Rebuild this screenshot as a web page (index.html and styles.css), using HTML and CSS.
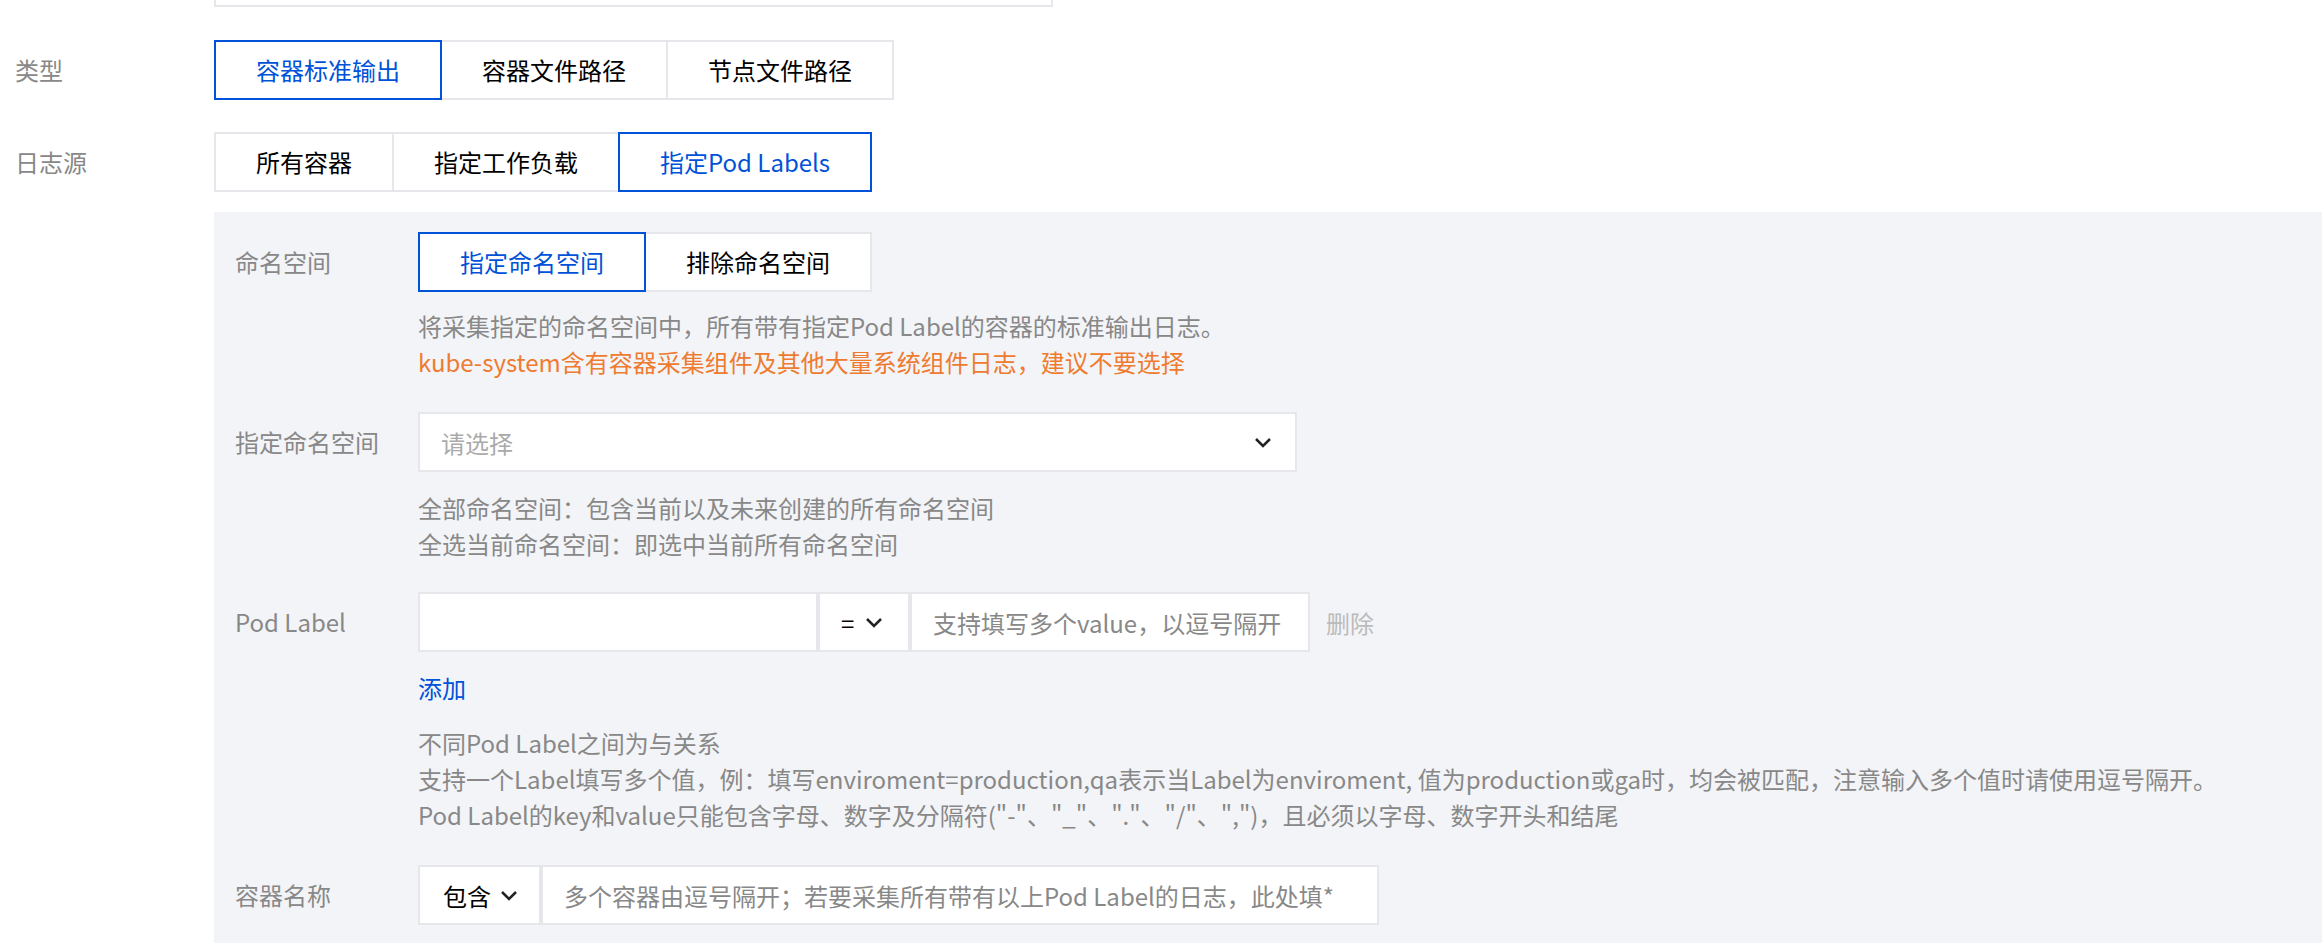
FILE: index.html
```html
<!DOCTYPE html>
<html lang="zh-CN">
<head>
<meta charset="UTF-8" />
<title>日志采集规则</title>
<link rel="stylesheet" href="styles.css">
</head>
<body>
<div class="page">
  <div class="stub"></div>

  <div class="field">
    <div class="field-label">类型</div>
    <div class="seg">
      <button class="seg-btn active">容器标准输出</button>
      <button class="seg-btn">容器文件路径</button>
      <button class="seg-btn">节点文件路径</button>
    </div>
  </div>

  <div class="field">
    <div class="field-label">日志源</div>
    <div class="seg">
      <button class="seg-btn">所有容器</button>
      <button class="seg-btn">指定工作负载</button>
      <button class="seg-btn active">指定Pod Labels</button>
    </div>
  </div>

  <section class="panel">
    <div class="sub-field">
      <div class="sub-label">命名空间</div>
      <div class="sub-control">
        <div class="seg">
          <button class="seg-btn active">指定命名空间</button>
          <button class="seg-btn">排除命名空间</button>
        </div>
        <div class="help">
          <p>将采集指定的命名空间中，所有带有指定Pod Label的容器的标准输出日志。</p>
          <p class="warn">kube-system含有容器采集组件及其他大量系统组件日志，建议不要选择</p>
        </div>
      </div>
    </div>

    <div class="sub-field gap-32">
      <div class="sub-label">指定命名空间</div>
      <div class="sub-control">
        <div class="select">
          <span class="placeholder">请选择</span>
          <svg class="chev" width="18" height="11" viewBox="0 0 18 11"><polyline points="2,2 9,9 16,2" /></svg>
        </div>
        <div class="help help-18">
          <p>全部命名空间：包含当前以及未来创建的所有命名空间</p>
          <p>全选当前命名空间：即选中当前所有命名空间</p>
        </div>
      </div>
    </div>

    <div class="sub-field gap-30">
      <div class="sub-label">Pod Label</div>
      <div class="sub-control">
        <div class="label-row">
          <div class="box key-box"></div>
          <div class="box op-box">
            <span>=</span>
            <svg class="chev" width="18" height="11" viewBox="0 0 18 11"><polyline points="2,2 9,9 16,2" /></svg>
          </div>
          <div class="box value-box"><span class="hint">支持填写多个value，以逗号隔开</span></div>
          <a class="remove">删除</a>
        </div>
        <a class="add">添加</a>
        <div class="help help-19">
          <p>不同Pod Label之间为与关系</p>
          <p>支持一个Label填写多个值，例：填写enviroment=production,qa表示当Label为enviroment, 值为production或ga时，均会被匹配，注意输入多个值时请使用逗号隔开。</p>
          <p>Pod Label的key和value只能包含字母、数字及分隔符("-"、"_"、"."、"/"、",")，且必须以字母、数字开头和结尾</p>
        </div>
      </div>
    </div>

    <div class="sub-field gap-32">
      <div class="sub-label">容器名称</div>
      <div class="sub-control">
        <div class="label-row">
          <div class="box match-box">
            <span>包含</span>
            <svg class="chev" width="18" height="11" viewBox="0 0 18 11"><polyline points="2,2 9,9 16,2" /></svg>
          </div>
          <div class="box name-box"><span class="hint">多个容器由逗号隔开；若要采集所有带有以上Pod Label的日志，此处填*</span></div>
        </div>
      </div>
    </div>
  </section>
</div>
</body>
</html>
```

FILE: styles.css
```css
* {
  box-sizing: border-box;
}
body {
  margin: 0;
  background: #fff;
  color: #000;
  font-family: "Noto Sans CJK SC", "Noto Sans", sans-serif;
  font-size: 24px;
}
p {
  margin: 0;
}
.page {
  padding-left: 15px;
}
.stub {
  margin-left: 199px;
  width: 839px;
  height: 7px;
  border: 2px solid #e6e7eb;
  border-top: none;
}
.field {
  display: flex;
  margin-top: 33px;
}
.field + .field {
  margin-top: 32px;
}
.field-label {
  width: 199px;
  line-height: 60px;
  color: #888;
}
.seg {
  display: flex;
}
.seg-btn {
  height: 60px;
  padding: 0 40px;
  border: 2px solid #e6e7eb;
  background: #fff;
  color: #000;
  font-family: inherit;
  font-size: 24px;
  line-height: 56px;
  margin-left: -2px;
  cursor: pointer;
}
.seg-btn:first-child {
  margin-left: 0;
}
.seg-btn.active {
  position: relative;
  z-index: 1;
  border-color: #0052d9;
  color: #0052d9;
}

/* Pod Label 面板 */
.panel {
  margin: 20px 0 0 199px;
  background: #f3f4f7;
  padding: 20px 0 18px 21px;
}
.sub-field {
  display: flex;
}
.gap-30 {
  margin-top: 30px;
}
.gap-32 {
  margin-top: 32px;
}
.sub-label {
  width: 183px;
  line-height: 60px;
  color: #888;
  flex-shrink: 0;
}
.help {
  margin-top: 16px;
  line-height: 36px;
  color: #888;
  white-space: nowrap;
}
.help-18 {
  margin-top: 18px;
}
.help-19 {
  margin-top: 19px;
}
.help .warn {
  color: #ee7b30;
}
.select {
  width: 879px;
  height: 60px;
  background: #fff;
  border: 2px solid #e6e7eb;
  display: flex;
  align-items: center;
  justify-content: space-between;
  padding: 0 23px 0 21px;
}
.placeholder {
  color: #aaa;
}
.chev polyline {
  fill: none;
  stroke: #222;
  stroke-width: 2.5;
}
.label-row {
  display: flex;
  align-items: center;
}
.box {
  height: 60px;
  background: #fff;
  border: 2px solid #e6e7eb;
  display: flex;
  align-items: center;
  gap: 11px;
}
.key-box {
  width: 400px;
}
.op-box {
  width: 92px;
  padding-left: 21px;
}
.value-box {
  width: 400px;
  padding-left: 21px;
}
.match-box {
  width: 123px;
  padding-left: 23px;
  gap: 9px;
}
.name-box {
  width: 838px;
  padding-left: 21px;
}
.hint {
  color: #888;
  white-space: nowrap;
}
.remove {
  margin-left: 16px;
  color: #bbb;
  cursor: pointer;
}
.add {
  display: block;
  margin-top: 18px;
  line-height: 36px;
  color: #0052d9;
  cursor: pointer;
}
```
